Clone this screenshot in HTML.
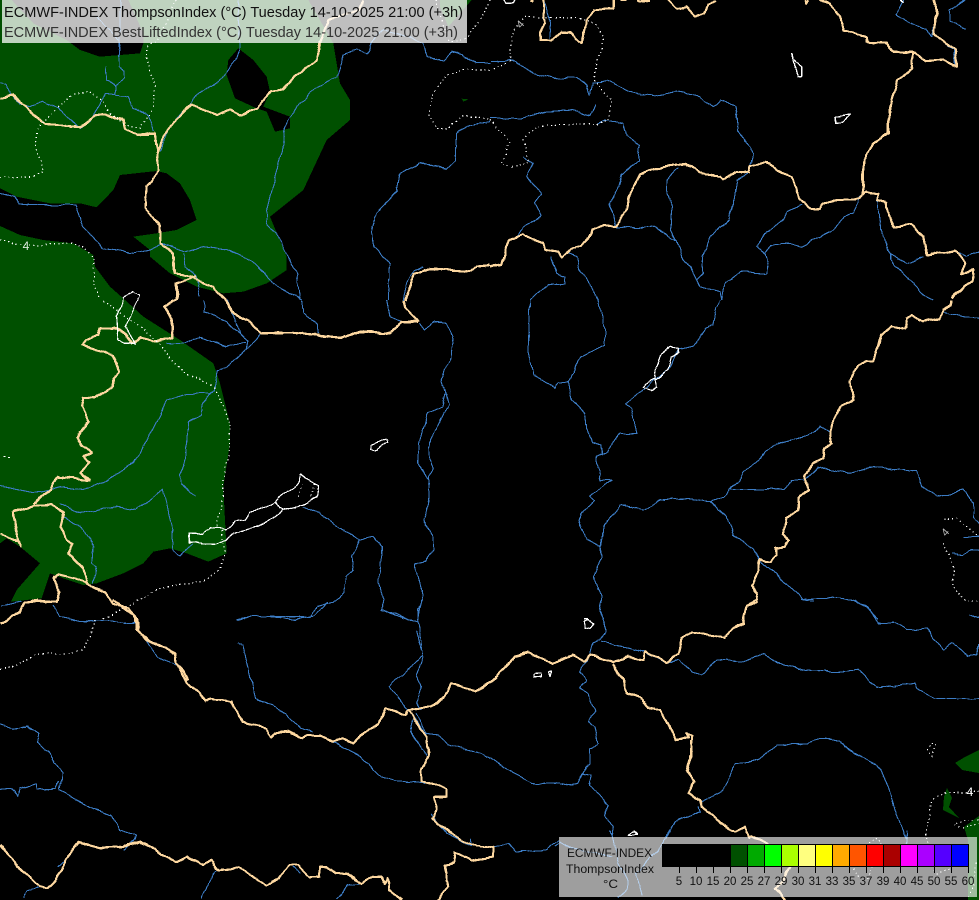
<!DOCTYPE html>
<html><head><meta charset="utf-8"><style>
html,body{margin:0;padding:0;background:#000}
svg{display:block}
polyline,polygon.l{vector-effect:non-scaling-stroke;fill:none;stroke-linejoin:round}
.r polyline{stroke:#3c7cc4;stroke-width:1.1}
.b polyline{stroke:#fdd7a0;stroke-width:2.2}
.w polyline{stroke:#fff;stroke-width:1.2}
.d polyline{stroke:#fff;stroke-width:1.2;stroke-dasharray:1.2 3;stroke-linecap:butt}
text{font-family:"Liberation Sans",sans-serif}
</style></head><body>
<svg width="979" height="900" viewBox="0 0 979 900" xmlns="http://www.w3.org/2000/svg">
<defs>
<filter id="wig" x="0" y="0" width="979" height="900" filterUnits="userSpaceOnUse" color-interpolation-filters="sRGB">
<feTurbulence type="fractalNoise" baseFrequency=".09" numOctaves="1" seed="4" result="n"/>
<feDisplacementMap in="SourceGraphic" in2="n" scale="5" xChannelSelector="R" yChannelSelector="G"/>
</filter>
</defs>
<rect width="979" height="900" fill="#000"/>
<g shape-rendering="crispEdges" fill="#005000">
<g transform="scale(.33333)">
<path fill-rule="evenodd" d="M0,0 L35,0 100,70 200,120 240,150 300,170 420,160 430,130 430,100 385,0 925,0 1000,130 1020,250 1050,300 1050,360 980,420 910,570 810,650 860,770 860,810 800,850 730,875 670,880 590,860 510,820 450,770 450,750 400,710 470,700 530,690 590,660 570,600 540,550 500,520 470,513 360,525 340,570 290,622 240,610 150,610 50,590 0,565 Z M715,145 L760,180 800,230 810,275 790,320 870,350 870,385 825,395 800,335 770,325 705,295 680,225 685,180 Z"/>
<polygon points="0,678 60,705 130,720 220,730 280,765 285,800 330,860 375,900 430,950 540,1020 640,1090 660,1150 690,1270 690,1330 670,1460 680,1660 625,1685 560,1660 510,1645 460,1655 430,1690 370,1720 290,1750 250,1755 190,1735 150,1720 125,1795 33,1805 50,1770 120,1690 60,1640 20,1615 0,1630"/>
<polygon points="1320,0 1415,0 1345,80 1320,20"/>
<polygon points="1385,296 1405,298 1390,305"/>
</g>
<polygon points="979,750 965,757 955,763 962,770 979,773"/>
<polygon points="947,788 952,798 949,807 959,818 943,810 944,797"/>
<polygon points="979,816 964,827 968,840 968,900 979,900"/>
</g>
<g shape-rendering="crispEdges" fill="none" filter="url(#wig)">

<!-- Z1 -->
<g transform="scale(.33333)">
<g class="r">
<polyline points="360,130 355,180 355,200 375,215 375,235 345,260 345,285"/>
<polyline points="318,200 320,240 345,262"/>
<polyline points="0,245 20,250 30,285 60,310 90,320 130,305 170,325 240,385 270,365 300,310 320,280 385,290 400,325 440,340 460,395"/>
<polyline points="715,150 705,180 680,210 660,245 620,265 580,295 570,320 530,350 500,400 480,455"/>
<polyline points="1125,110 1100,160 1070,150 1030,165 1010,230 945,265 900,310 850,380 855,430 830,510 800,630 800,670 830,700 865,770 890,820 900,900"/>
<polyline points="0,580 40,590 60,610 150,615 225,615 250,680 310,745 400,760 450,750 487,730 550,755 610,740 680,750 760,785 820,850 870,880 905,900"/>
<polyline points="550,760 555,800 590,830 600,890"/>
<polyline points="1270,130 1280,170 1330,180 1355,155 1385,165 1425,190 1470,190"/>
<polyline points="1470,365 1410,375 1370,400 1365,480 1340,505 1260,490 1200,520 1190,575 1130,640 1115,680 1120,740 1170,790 1165,900"/>
<polyline points="1210,900 1220,845 1240,810 1270,800"/>
<polyline points="360,0 360,130"/>
<polyline points="290,50 330,90 360,125"/>
<polyline points="715,0 717,150"/>
<polyline points="1125,110 1150,90 1230,110 1270,130"/>
</g>
<g class="b">
<polyline points="0,295 35,287 80,320 100,345 135,372 180,375 240,382 260,370 285,345 315,340 345,355 370,360 375,385 410,403 465,400 472,460 478,510 440,560 435,620 460,650 478,680 482,730 520,760 525,820 575,830 590,840 640,860 675,900"/>
<polyline points="472,460 490,410 520,365 575,315 650,345 690,328 720,345 770,325 810,275 850,270 890,225 950,180 960,130 985,60 1080,30 1090,0"/>
<polyline points="590,830 530,850 530,900"/>
<polyline points="1215,900 1235,850 1240,820 1290,805 1410,815 1430,800 1470,795"/>
</g>
<g class="w"><polyline points="370,895 395,875 420,885 415,900"/></g>
<g class="d">
<polyline points="0,533 100,530 130,515 105,430 110,390 150,345 215,285 260,275 300,295 330,340 370,370 420,385 460,320 465,260 440,180 440,140 465,125 510,50 530,0"/>
<polyline points="0,720 60,735 130,735 190,728 250,740 280,770 285,860 295,900"/>
<polyline points="1470,210 1400,208 1340,225 1300,280 1285,340 1310,385 1345,385 1385,350 1430,350 1470,360"/>
<polyline points="1310,0 1320,50 1350,125 1400,115 1440,60 1470,0"/>
</g>
</g>

<!-- Z2 -->
<g transform="translate(0,300) scale(.33333)">
<g class="r">
<polyline points="905,0 910,40 950,70 955,100"/>
<polyline points="680,0 720,100 745,120 740,150 680,200 650,215"/>
<polyline points="610,0 610,35 650,50 680,65 700,85 720,100"/>
<polyline points="500,130 550,130 600,110 680,140 740,125"/>
<polyline points="780,100 740,150"/>
<polyline points="650,215 640,270 610,310 605,345 565,365 555,490 540,525 545,550 585,590"/>
<polyline points="0,558 100,578 130,575 180,560 250,570 320,540 400,490 460,385 500,300 560,280 635,280"/>
<polyline points="180,610 240,640 350,620 410,630 490,565 520,690 518,750 540,770 575,735"/>
<polyline points="190,650 250,690 280,740 275,790 290,800 280,850"/>
<polyline points="1160,0 1170,50 1205,65"/>
<polyline points="905,620 960,640 1020,685 1080,720 1120,712 1145,740 1135,850 1155,900 1145,935 1190,940 1225,960"/>
<polyline points="1080,720 1055,770 1060,810 1040,830 1030,880 1000,905 950,920 930,950 850,950 750,950 710,958"/>
<polyline points="1260,70 1275,90 1300,65 1340,70 1360,110 1350,180 1335,210 1325,240 1345,310 1330,350 1290,420 1285,470 1300,505 1285,530 1290,610 1270,660 1300,710 1300,750 1280,780 1245,795 1265,870 1270,890 1255,930 1255,960"/>
<polyline points="1335,280 1325,320 1285,340 1255,430 1255,490 1285,540"/>
</g>
<g class="b">
<polyline points="675,0 700,40 750,65 785,100 880,97 1020,113 1080,95 1170,100 1205,65 1255,65 1240,50 1215,25 1210,0"/>
<polyline points="530,0 495,20 515,60 517,115 460,125 420,110 395,130 375,100 345,85 300,85 295,105 260,120 250,135 335,165 360,215 340,235 340,260 285,295 250,292 245,320 265,365 230,410 245,440 275,460 250,470 270,485 240,515 270,540 172,530 150,570 100,610"/>
</g>
<g class="w">
<polyline points="415,0 385,60 375,80 405,130 375,130 355,120 350,50 370,0"/>
<polyline points="568,698 585,698 610,705 630,680 660,685 675,688 705,665 735,660 750,635 800,622 820,610 830,600 855,580 880,565 895,545 903,523 915,535 955,555 950,590 905,615 870,625 850,630 820,655 770,680 700,700 680,720 640,733 590,728 568,730 566,710 568,698"/>
<polyline points="825,605 840,625 850,630"/>
<polyline points="1112,435 1160,415 1163,425 1125,452 1112,450 1112,435"/>
<polyline points="10,468 16,468"/><polyline points="24,470 30,472"/>
</g>
<g class="d">
<polyline points="310,0 400,65 480,130 510,175 560,225 600,235 640,260 680,340 690,370 690,440 670,540 665,620 650,680"/>
<polyline points="665,690 675,760 660,810 610,845 540,850 470,870 390,915 310,955"/>
<polyline points="895,590 910,550"/><polyline points="930,590 945,550"/>
</g>
</g>

<!-- Z4 -->
<g transform="translate(490,0) scale(.33333)">
<g class="r">
<polyline points="0,185 60,182 100,200 130,220 190,235 260,232 290,260 300,285"/>
<polyline points="300,285 305,250 350,240 400,265 430,280 490,288 560,275 630,290 670,320 690,300 735,315 745,395 790,460 775,520 740,540 730,610 715,660 660,710 635,770 640,820 620,840"/>
<polyline points="0,355 95,355 170,335 250,330 300,345 318,318"/>
<polyline points="320,372 345,360 400,370 410,410 450,435 445,480 395,525 385,560 360,610 375,680 460,685 490,680 560,720 575,770 600,800 630,860 690,875 695,900"/>
<polyline points="100,470 130,490 110,530 155,580 135,610 155,650 100,680 75,715"/>
<polyline points="565,505 530,540 530,570 545,620 545,690 560,720"/>
<polyline points="185,770 200,820 225,830 225,850 175,855 118,900"/>
<polyline points="235,760 260,770 265,800 305,860 325,900"/>
<polyline points="935,615 890,635 880,660 830,695 800,740 825,760 835,800 830,822 755,815 705,850 695,900"/>
<polyline points="825,760 845,735 900,730 930,740 1030,690 1060,650 1090,640 1110,590"/>
<polyline points="1160,590 1175,710 1190,730 1200,760 1250,790 1300,770"/>
<polyline points="1200,760 1200,780 1250,830 1300,885 1330,900"/>
<polyline points="1405,755 1430,770 1467,755"/>
<polyline points="1240,0 1220,40 1250,65 1310,90 1325,110 1330,80"/>
<polyline points="1425,0 1380,30 1380,60 1425,88"/>
<polyline points="160,0 175,40 185,70 180,115"/>
<polyline points="1330,100 1390,150 1395,195"/>
</g>
<g class="b">
<polyline points="0,800 35,795 55,720 100,703 120,715 160,730 165,748 205,755 215,772 245,745 275,740 305,700 305,688 345,675 375,680 410,630 415,590 450,525 520,500 585,490 630,520 690,530 700,540 740,515 775,520 780,500 825,485 860,510 905,530 930,600 960,625 990,625 1000,610 1040,600 1110,597 1130,575 1165,580 1160,600 1190,610 1195,650 1215,680 1260,672 1300,710 1310,765 1400,750 1425,790 1415,825 1450,810 1445,845 1420,860 1385,895"/>
<polyline points="375,680 410,630"/>
<polyline points="1120,590 1120,480 1150,430 1195,400 1195,350 1205,300 1225,240 1265,205 1270,160"/>
<polyline points="1270,158 1210,155 1190,130 1130,125 1130,110 1060,90 1050,50 1020,10 990,0"/>
<polyline points="1270,158 1310,185 1360,180 1400,200 1395,150 1330,100 1340,40 1330,0"/>
<polyline points="160,0 165,70 150,100 150,120 185,120 215,97 240,100 275,130 290,60 315,30 370,25 370,0"/>
<polyline points="535,0 560,25 590,20 615,50 640,40 655,15 680,0"/>
<polyline points="390,0 410,3"/><polyline points="440,0 480,5"/><polyline points="945,0 950,10 955,0"/><polyline points="120,0 130,5"/>
</g>
<g class="w">
<polyline points="905,158 905,175 935,200 935,230 925,230 915,195 905,178"/>
<polyline points="1033,350 1082,345 1060,365 1035,367 1033,350"/>
<polyline points="45,0 50,10 70,10 75,0"/>
<polyline points="1230,0 1240,8"/>
</g>
<g class="d">
<polyline points="0,212 60,185 65,110 85,70 110,50 280,55 320,75 340,115 310,240 365,300 355,360 320,372 220,375 140,378 100,420 115,475 120,485 70,502 35,490 60,425 0,360"/>
</g>
</g>

<!-- Z5 -->
<g transform="translate(490,300) scale(.33333)">
<g class="r">
<polyline points="120,0 115,150 130,225 195,265 205,248 235,245 270,170 345,135 345,85 325,0"/>
<polyline points="235,245 245,295 285,340 290,385 305,425 333,435 335,460 320,470 330,540 365,540 300,590 315,605 270,640 265,660 290,720 330,740 335,770 310,825 335,890 330,935 340,960"/>
<polyline points="335,460 350,455 390,400 440,400 425,325 405,310 455,275 490,240 535,210 565,150 610,140 645,85 670,75 680,20 690,0"/>
<polyline points="340,680 330,740"/>
<polyline points="340,680 390,615 460,630 510,600 590,595 660,605 700,590 720,565"/>
<polyline points="660,605 710,650 730,705 790,745 810,785 860,825 905,865 940,900 1030,892 1090,900 1130,920 1165,960"/>
<polyline points="720,565 745,545 760,520 850,435 950,410 990,380 1020,400"/>
<polyline points="720,568 830,568 885,565 905,540 945,540 985,500 1070,520 1150,500 1280,515 1295,560 1340,590 1420,570 1450,610 1450,650 1467,670"/>
<polyline points="1360,35 1420,50 1467,55"/>
<polyline points="1420,710 1467,710"/>
<polyline points="1385,760 1420,765 1440,750 1467,750"/>
<polyline points="1440,945 1467,955"/>
</g>
<g class="b">
<polyline points="1385,0 1385,15 1360,30 1350,55 1300,65 1265,45 1250,55 1245,85 1205,77 1175,105 1150,180 1130,180 1090,212 1080,250 1090,300 1055,315 1030,360 1020,400 1025,430 1005,445 1000,475 970,490 945,525 955,570 925,595 925,630 890,655 880,700 895,720 885,740 855,745 860,765 840,785 810,780 805,810 785,860 805,880 800,910 770,915 760,960"/>
</g>
<g class="w">
<polyline points="538,137 565,148 565,160 545,170 535,210 495,240 500,262 485,270 460,262 465,250 495,235 500,200 515,165 538,137"/>
<polyline points="285,958 295,958"/>
</g>
<g class="d">
<polyline points="1362,660 1400,655 1467,710"/>
<polyline points="1360,730 1390,800 1390,860 1420,900 1467,905"/>
</g>
</g>

<!-- Z6 -->
<g transform="translate(0,600) scale(.35714,.33333)">
<g class="r">
<polyline points="0,18 60,5"/>
<polyline points="150,15 170,50 225,65 300,60 345,70 378,68"/>
<polyline points="410,120 440,170 495,195"/>
<polyline points="665,60 700,50 760,50 825,58 880,45 920,5"/>
<polyline points="665,132 680,135 715,295 760,315 800,340 840,385 875,395"/>
<polyline points="1180,0 1170,65 1185,170 1165,230 1180,260 1165,305 1180,330"/>
<polyline points="1070,30 1145,60 1170,65"/>
<polyline points="1185,165 1090,260 1140,325 1195,405"/>
<polyline points="1165,95 1180,150"/>
<polyline points="930,425 1010,470 1060,525 1110,545 1190,550"/>
<polyline points="1155,360 1150,395 1195,470"/>
<polyline points="1165,340 1195,400 1225,405 1260,435 1350,460 1430,515 1490,548 1568,552"/>
<polyline points="1205,640 1250,700 1320,740 1320,715"/>
<polyline points="1380,745 1425,730 1445,755 1530,748 1565,720"/>
<polyline points="0,373 35,385 75,378 110,400 105,430 135,455 155,490 175,520 165,570 240,615 310,645 335,690 380,705 375,720 345,750"/>
<polyline points="0,568 30,565 50,590 55,565 105,550 105,570 155,565 165,545"/>
<polyline points="68,895 80,870 125,860"/>
<polyline points="160,800 185,780"/>
<polyline points="565,895 590,840 605,810"/>
<polyline points="940,895 975,855 1010,850"/>
<polyline points="820,800 840,820"/>
</g>
<g class="b">
<polyline points="1568,180 1545,190 1480,158 1440,170 1415,205 1370,250 1330,275 1265,250 1245,290 1210,320 1140,330 1135,345 1080,325 1060,370 1010,405 990,430 960,415 930,425 895,405 860,405 850,415 810,395 770,400 760,410 745,385 680,365 650,305 590,295 575,305 560,280 525,250 495,190 490,160 415,120 380,85 378,50 340,20 315,0"/>
<polyline points="1145,330 1160,360 1195,410 1200,470 1180,510 1180,545 1215,550 1250,565 1250,590 1215,590 1225,630 1210,655 1250,690 1290,720 1320,735 1380,745 1380,770 1320,780 1275,755 1270,790 1245,795 1255,860 1225,900"/>
<polyline points="0,735 50,800 110,860 130,863 155,840 185,780 220,725 280,745 340,740 390,725 420,740 490,788 525,770 570,795 590,780 610,810 670,805 745,855 780,835 810,795 835,795 865,832 895,830 895,800 915,800 940,820 975,820 1010,850 1040,830 1070,830 1075,850 1085,835 1090,870 1125,900"/>
</g>
<g class="w">
<polyline points="1495,222 1515,220 1515,230 1495,232 1495,222"/>
<polyline points="1535,215 1545,215 1540,230 1535,215"/>
</g>
</g>

<!-- Z11 -->
<g transform="translate(0,480) scale(.33333)">
<g class="b">
<polyline points="0,160 25,172 55,180 62,198 45,140 40,95 80,85 100,75 150,72 190,95 180,140 200,180 220,190 205,220 245,260 260,300 265,315 315,335 340,375 385,385 410,420 415,450 440,480 525,520 530,550 550,570 565,600"/>
<polyline points="265,315 225,295 175,283 160,295 178,340 170,365 100,362 75,365 60,395 0,432"/>
</g>
<g class="d">
<polyline points="285,420 270,470 245,510 190,522 110,522 50,555 0,570"/>
</g>
</g>

<!-- Z12 -->
<g transform="translate(560,600) scale(.33333)">
<g class="r">
<polyline points="125,0 120,30 140,90 125,118 100,125 90,165 70,195 60,215 80,245 60,265 85,285 105,335 85,365 105,380 115,430 90,450 90,490 65,520 50,550 0,555"/>
<polyline points="125,125 210,145 250,155 315,187 360,180 395,215 425,222 470,180 545,185 610,160 650,190 740,210 820,215 895,208 950,262 1065,252 1075,270 1125,295 1257,295"/>
<polyline points="65,520 95,525 90,555 145,615 135,650 160,680 155,710"/>
<polyline points="885,0 930,30 955,70 1005,68 1040,90 1100,85 1150,150 1180,130 1225,170 1250,165 1257,130"/>
<polyline points="725,0 760,5"/>
<polyline points="1225,45 1257,55"/>
<polyline points="415,620 420,635 345,665 320,715"/>
<polyline points="425,605 490,570 525,490 590,480 650,435 740,432 765,418 835,420 880,460 950,495 985,560 1005,630 1040,720"/>
</g>
<g class="b">
<polyline points="590,0 560,15 550,70 515,85 490,115 440,105 400,95 365,115 355,160 320,187 255,155 250,180 200,170 160,185 125,175 90,165 70,185 40,165 0,180"/>
<polyline points="160,190 190,240 200,275 240,290 265,322 300,330 330,385 350,420 385,415 380,400 395,410 390,480 380,510 405,545 385,580 420,600 425,620 490,675 525,695 555,680 570,715"/>
</g>
<g class="w">
<polyline points="75,65 85,60 98,70 90,82 75,85 75,65"/>
</g>
<g class="d">
<polyline points="1115,430 1130,435 1115,470 1105,450 1115,430"/>
<polyline points="1257,575 1160,578 1115,600 1100,700 1100,720"/>
<polyline points="1190,670 1210,660 1257,660"/>
<polyline points="1185,675 1215,685 1257,670"/>
</g>
</g>

<!-- legend underlay -->
<g transform="translate(555,830) scale(.33333)">
<g class="r">
<polyline points="0,50 15,35 40,50 100,65 170,80"/>
<polyline points="165,0 190,100 215,150 215,180 190,205"/>
<polyline points="345,0 310,60 245,130 260,200"/>
</g>
<g class="w"><polyline points="220,15 235,5 245,15 220,15"/></g>
</g>
<g transform="translate(767,830) scale(.33333)">
<g class="b">
<polyline points="-50,15 0,40 70,110 50,150 25,175 55,210"/>
</g>
<g class="r"><polyline points="420,0 418,40 415,70"/></g>
<g class="d">
<polyline points="305,40 330,25 345,35 310,130 300,150"/>
<polyline points="260,115 275,140"/>
<polyline points="500,120 510,130 550,115"/>
<polyline points="480,0 480,40"/>
<polyline points="625,100 620,170 600,205"/>
</g>
</g>
</g>

<!-- contour labels -->
<text x="26" y="250" font-size="12" fill="#d8e8d8" text-anchor="middle">4</text>
<text x="970" y="796" font-size="12" fill="#fff" text-anchor="middle">4</text>
<text transform="translate(520,24) rotate(-48)" font-size="11" fill="#bbb" text-anchor="middle" y="4">4</text>
<text transform="translate(945,532) rotate(-48)" font-size="11" fill="#bbb" text-anchor="middle" y="4">4</text>

<!-- title overlay -->
<rect x="2" y="0" width="465" height="43" fill="#fff" fill-opacity=".75"/>
<text x="4" y="17" font-size="14.5" fill="#111" textLength="459" lengthAdjust="spacingAndGlyphs">ECMWF-INDEX ThompsonIndex (°C) Tuesday 14-10-2025 21:00 (+3h)</text>
<text x="4" y="37" font-size="14.5" fill="#333" textLength="454" lengthAdjust="spacingAndGlyphs">ECMWF-INDEX BestLiftedIndex (°C) Tuesday 14-10-2025 21:00 (+3h)</text>

<!-- legend -->
<rect x="559" y="837" width="418" height="60" fill="#fff" fill-opacity=".62"/>
<g shape-rendering="crispEdges">
<rect x="662" y="844" width="68" height="23" fill="#000"/>
<rect x="730" y="844" width="17" height="23" fill="#005000"/>
<rect x="747" y="844" width="17" height="23" fill="#00aa00"/>
<rect x="764" y="844" width="17" height="23" fill="#00ff00"/>
<rect x="781" y="844" width="17" height="23" fill="#aaff00"/>
<rect x="798" y="844" width="17" height="23" fill="#ffff7f"/>
<rect x="815" y="844" width="17" height="23" fill="#ffff00"/>
<rect x="832" y="844" width="17" height="23" fill="#ffaa00"/>
<rect x="849" y="844" width="17" height="23" fill="#ff5500"/>
<rect x="866" y="844" width="17" height="23" fill="#ff0000"/>
<rect x="883" y="844" width="17" height="23" fill="#aa0000"/>
<rect x="900" y="844" width="17" height="23" fill="#ff00ff"/>
<rect x="917" y="844" width="17" height="23" fill="#aa00ff"/>
<rect x="934" y="844" width="17" height="23" fill="#5500ff"/>
<rect x="951" y="844" width="17" height="23" fill="#0000ff"/>
<path fill="none" stroke="#000" stroke-width="1" d="M662.5,844.5H968.5V867M730.5,844V873M747.5,844V873M764.5,844V873M781.5,844V873M798.5,844V873M815.5,844V873M832.5,844V873M849.5,844V873M866.5,844V873M883.5,844V873M900.5,844V873M917.5,844V873M934.5,844V873M951.5,844V873M968.5,867V873M662,866.5H969M679.5,867V873M696.5,867V873M713.5,867V873"/>
</g>
<g font-size="11.5" fill="#111">
<text x="567" y="857" textLength="85" lengthAdjust="spacingAndGlyphs">ECMWF-INDEX</text>
<text x="566" y="873" textLength="88" lengthAdjust="spacingAndGlyphs">ThompsonIndex</text>
<text x="603" y="888" textLength="15" lengthAdjust="spacingAndGlyphs">°C</text>
</g>
<g font-size="11.5" fill="#111" text-anchor="middle">
<text x="679" y="885">5</text><text x="696" y="885">10</text><text x="713" y="885">15</text><text x="730" y="885">20</text><text x="747" y="885">25</text><text x="764" y="885">27</text><text x="781" y="885">29</text><text x="798" y="885">30</text><text x="815" y="885">31</text><text x="832" y="885">33</text><text x="849" y="885">35</text><text x="866" y="885">37</text><text x="883" y="885">39</text><text x="900" y="885">40</text><text x="917" y="885">45</text><text x="934" y="885">50</text><text x="951" y="885">55</text><text x="968" y="885">60</text>
</g>
</svg>
</body></html>
